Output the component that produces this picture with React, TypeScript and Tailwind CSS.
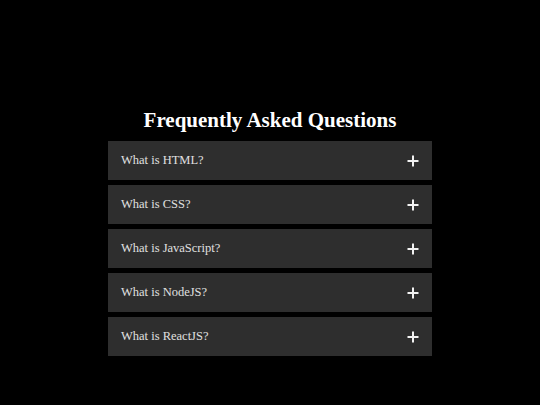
export default function App() {
  const items = ["What is HTML?", "What is CSS?", "What is JavaScript?", "What is NodeJS?", "What is ReactJS?"];
  return (
    <div className="w-[540px] h-[405px] bg-black flex flex-col items-center pt-[106px]" style={{ fontFamily: '"Liberation Serif", serif' }}>
      <h1 className="text-[21px] leading-[28px] font-bold text-white mb-[7px]">Frequently Asked Questions</h1>
      <div className="w-[324px] flex flex-col gap-[5px]">
        {items.map((q) => (
          <div key={q} className="h-[39px] bg-[#2e2e2e] flex items-center justify-between pl-[13px] pr-[13px]">
            <span className="text-[12.5px] text-[#e0e0e0]">{q}</span>
            <svg width="12" height="12" viewBox="0 0 12 12" className="block">
              <path d="M6 0.5V11.5M0.5 6H11.5" stroke="#f2f2f2" strokeWidth="2" />
            </svg>
          </div>
        ))}
      </div>
    </div>
  );
}
